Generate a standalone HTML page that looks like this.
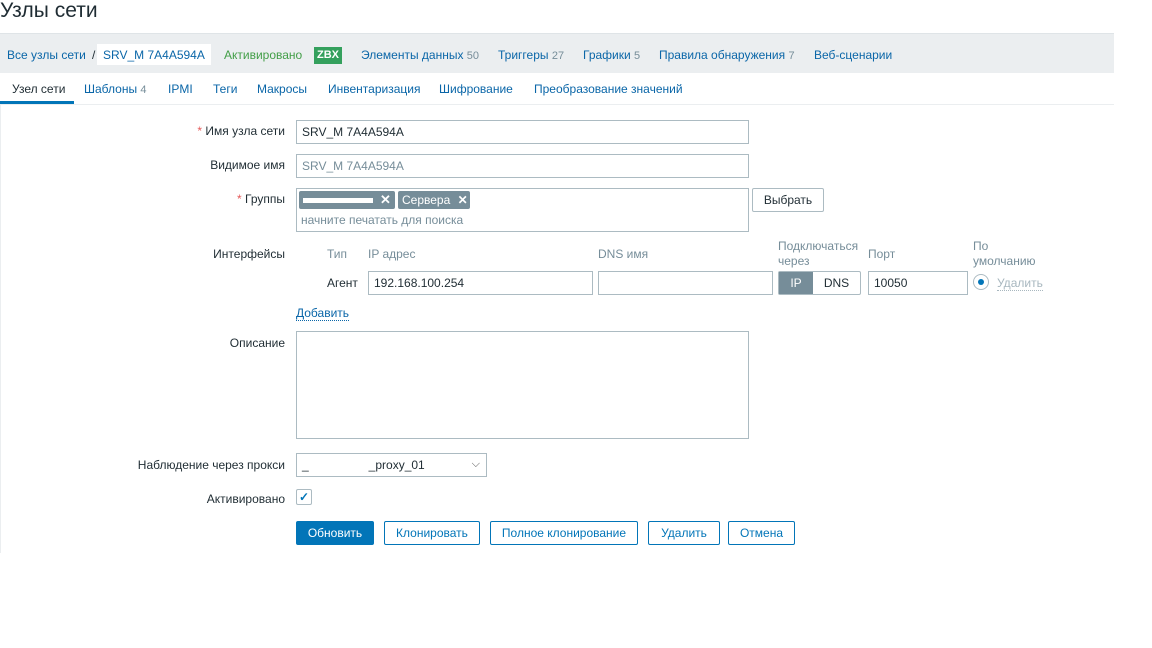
<!DOCTYPE html><html><head><meta charset="utf-8"><style>
*{box-sizing:border-box}body{margin:0;width:1152px;height:648px;background:#fff;font-family:"Liberation Sans",Arial,sans-serif;font-size:12px;color:#1f2c33;position:relative;overflow:hidden}
.a{position:absolute;white-space:nowrap}
.lbl{position:absolute;right:867px;white-space:nowrap}
.in{position:absolute;border:1px solid #acbbc2;background:#fff;height:24px;padding:4px 5px;line-height:14px}
.lk{color:#0a66a8}.g{color:#768d99}
.btn{position:absolute;top:521px;height:24px;border:1px solid #0275b8;color:#0275b8;background:#fff;text-align:center;line-height:22px;border-radius:2px}
.star{color:#e45959}
</style></head><body>
<div class="a" style="left:0;top:-1px;font-size:21px;color:#1f2c33">Узлы сети</div>
<div class="a" style="left:0;top:33px;width:1114px;height:40px;background:#ebeef0;border-top:1px solid #dfe4e7"></div>
<div class="a lk" style="left:7px;top:48px">Все узлы сети</div>
<div class="a" style="left:92px;top:48px">/</div>
<div class="a lk" style="left:97px;top:44px;background:#fff;padding:4px 6px;height:21px">SRV_M 7A4A594A</div>
<div class="a" style="left:224px;top:48px;color:#429e47">Активировано</div>
<div class="a" style="left:314px;top:47px;background:#34a05d;color:#fff;font-weight:bold;font-size:11px;padding:2px 3px;line-height:13px">ZBX</div>
<div class="a lk" style="left:361px;top:48px">Элементы данных <span class="g" style="font-size:11px">50</span></div>
<div class="a lk" style="left:498px;top:48px">Триггеры <span class="g" style="font-size:11px">27</span></div>
<div class="a lk" style="left:583px;top:48px">Графики <span class="g" style="font-size:11px">5</span></div>
<div class="a lk" style="left:659px;top:48px">Правила обнаружения <span class="g" style="font-size:11px">7</span></div>
<div class="a lk" style="left:814px;top:48px">Веб-сценарии</div>
<div class="a" style="left:0;top:104px;width:1114px;height:1px;background:#ebeef0"></div>
<div class="a" style="left:0;top:105px;width:1px;height:448px;background:#ebeef0"></div>
<div class="a" style="left:12px;top:82px">Узел сети</div>
<div class="a" style="left:0;top:101px;width:74px;height:3px;background:#0275b8"></div>
<div class="a lk" style="left:84px;top:82px">Шаблоны <span class="g" style="font-size:11px">4</span></div>
<div class="a lk" style="left:168px;top:82px">IPMI</div>
<div class="a lk" style="left:213px;top:82px">Теги</div>
<div class="a lk" style="left:257px;top:82px">Макросы</div>
<div class="a lk" style="left:328px;top:82px">Инвентаризация</div>
<div class="a lk" style="left:439px;top:82px">Шифрование</div>
<div class="a lk" style="left:534px;top:82px">Преобразование значений</div>

<div class="lbl" style="top:124px"><span class="star">*</span> Имя узла сети</div>
<div class="in" style="left:296px;top:120px;width:453px">SRV_M 7A4A594A</div>
<div class="lbl" style="top:158px">Видимое имя</div>
<div class="in" style="left:296px;top:154px;width:453px;color:#768d99">SRV_M 7A4A594A</div>
<div class="lbl" style="top:192px"><span class="star">*</span> Группы</div>
<div class="in" style="left:296px;top:188px;width:453px;height:44px;padding:0"></div>
<div class="a" style="left:299px;top:191px;width:96px;height:18px;background:#768d99;border-radius:2px"><span style="position:absolute;left:4px;top:7px;width:70px;height:5px;background:#fff"></span><span style="position:absolute;left:81px;top:1px;color:#fff;font-weight:bold;font-size:13px">✕</span></div>
<div class="a" style="left:398px;top:191px;width:72px;height:18px;background:#768d99;border-radius:2px;color:#fff;padding:2px 4px">Сервера <b style="font-size:12px;margin-left:4px">✕</b></div>
<div class="a g" style="left:301px;top:213px">начните печатать для поиска</div>
<div class="a" style="left:752px;top:188px;width:72px;height:24px;border:1px solid #acbbc2;border-radius:2px;text-align:center;line-height:22px">Выбрать</div>

<div class="lbl" style="top:247px">Интерфейсы</div>
<div class="a g" style="left:327px;top:247px">Тип</div>
<div class="a g" style="left:368px;top:247px">IP адрес</div>
<div class="a g" style="left:598px;top:247px">DNS имя</div>
<div class="a g" style="left:778px;top:239px;line-height:15px">Подключаться<br>через</div>
<div class="a g" style="left:868px;top:247px">Порт</div>
<div class="a g" style="left:973px;top:239px;line-height:15px">По<br>умолчанию</div>
<div class="a" style="left:327px;top:276px">Агент</div>
<div class="in" style="left:368px;top:271px;width:225px">192.168.100.254</div>
<div class="in" style="left:598px;top:271px;width:175px"></div>
<div class="a" style="left:778px;top:271px;width:83px;height:24px;border:1px solid #acbbc2;border-radius:2px"><span style="position:absolute;left:0;top:0;width:34px;height:22px;background:#768d99;color:#fff;text-align:center;line-height:22px">IP</span><span style="position:absolute;left:34px;top:0;width:47px;text-align:center;line-height:22px">DNS</span></div>
<div class="in" style="left:868px;top:271px;width:100px">10050</div>
<div class="a" style="left:973px;top:274px;width:16px;height:16px;border:1px solid #acbbc2;border-radius:50%"><span style="position:absolute;left:4px;top:4px;width:6px;height:6px;border-radius:50%;background:#0275b8"></span></div>
<div class="a" style="left:997px;top:276px;color:#a8b7bf;border-bottom:1px dotted #a8b7bf">Удалить</div>
<div class="a lk" style="left:296px;top:306px;border-bottom:1px dotted #0a66a8">Добавить</div>

<div class="lbl" style="top:336px">Описание</div>
<div class="in" style="left:296px;top:331px;width:453px;height:108px"></div>
<div class="lbl" style="top:458px">Наблюдение через прокси</div>
<div class="in" style="left:296px;top:453px;width:191px">_&nbsp;&nbsp;&nbsp;&nbsp;&nbsp;&nbsp;&nbsp;&nbsp;&nbsp;&nbsp;&nbsp;&nbsp;&nbsp;&nbsp;&nbsp;&nbsp;&nbsp;&nbsp;_proxy_01<span style="position:absolute;right:6px;top:3px;font-size:11px;color:#555">⌵</span></div>
<div class="lbl" style="top:492px">Активировано</div>
<div class="a" style="left:296px;top:489px;width:16px;height:16px;border:1px solid #acbbc2;border-radius:2px;color:#0275b8;text-align:center;line-height:14px;font-size:12px;font-weight:bold">✓</div>
<div class="btn" style="left:296px;width:78px;background:#0275b8;color:#fff">Обновить</div>
<div class="btn" style="left:384px;width:96px">Клонировать</div>
<div class="btn" style="left:490px;width:148px">Полное клонирование</div>
<div class="btn" style="left:648px;width:72px">Удалить</div>
<div class="btn" style="left:728px;width:67px">Отмена</div>
</body></html>
